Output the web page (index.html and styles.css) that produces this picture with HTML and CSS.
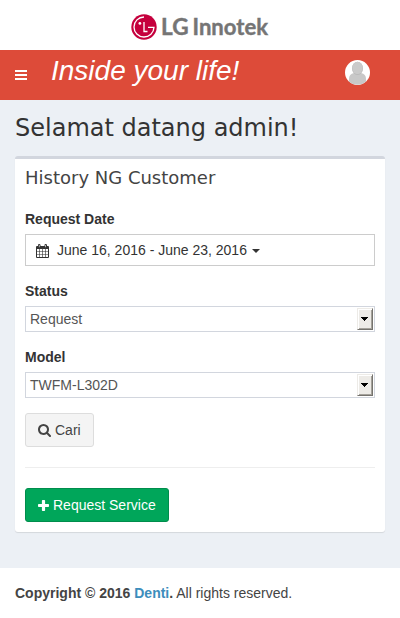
FILE: index.html
```html
<!DOCTYPE html>
<html lang="id">
<head>
<meta charset="utf-8">
<title>LG Innotek</title>
<link rel="stylesheet" href="styles.css">
</head>
<body>
<header>
  <a class="logo">
    <svg class="logo-mark" width="26" height="26" viewBox="0 0 26 26">
      <circle cx="13" cy="13" r="12.7" fill="#c5003d"/>
      <g fill="none" stroke="#fff" stroke-width="1.3">
        <path d="M13 3A10 10 0 1 0 23 13.3H17"/>
        <path d="M13 8V17.500H16.500"/>
      </g>
      <circle cx="8.900" cy="9.400" r="1.400" fill="#fff"/>
    </svg>
    <svg class="logo-name" width="112" height="32" viewBox="0 0 112 32">
      <text x="0" y="24" textLength="27.500" lengthAdjust="spacingAndGlyphs">LG</text>
      <text x="31.500" y="24" textLength="75.500" lengthAdjust="spacingAndGlyphs">Innotek</text>
    </svg>
  </a>
  <nav class="navbar">
    <svg class="bars" width="12" height="10" viewBox="0 0 12 10"><path fill="#fff" d="M0 0h12v2H0zM0 4h12v2H0zM0 8h12v2H0z"/></svg>
    <span class="slogan">Inside your life!</span>
    <svg class="avatar" width="25" height="25" viewBox="0 0 25 25">
      <defs><clipPath id="disc"><circle cx="12.5" cy="12.5" r="12.5"/></clipPath></defs>
      <circle cx="12.5" cy="12.5" r="12.5" fill="#fff"/>
      <g clip-path="url(#disc)">
        <path fill="#c8c8c8" d="M4 23.500V19Q4 14 9 13H16Q21 14 21 19V23.500Q12.500 26 4 23.500z"/>
        <ellipse cx="12.5" cy="8.400" rx="5.500" ry="6.600" fill="#b8b8b8"/>
        <ellipse cx="12.5" cy="8" rx="5.200" ry="6.200" fill="#cacaca"/>
      </g>
    </svg>
  </nav>
</header>
<main>
  <h1>Selamat datang admin!</h1>
  <section class="box">
    <h2>History NG Customer</h2>
    <div class="field">
      <label>Request Date</label>
      <div class="range">
        <svg class="calendar" width="13" height="14" viewBox="0 0 13 14">
          <path fill="#333" fill-rule="evenodd" d="M1 2h1V1q0-1 1.200-1t1.300 1v1h4V1q0-1 1.200-1T11 1v1h1q1 0 1 1v10q0 1-1 1H1q-1 0-1-1V3q0-1 1-1zM1 5v2h2V5zM3.600 5v2H6V5zM6.600 5v2H9V5zM9.600 5v2H12V5zM1 7.600V10h2V7.600zM3.600 7.600V10H6V7.600zM6.600 7.600V10H9V7.600zM9.600 7.600V10H12V7.600zM1 10.600V13h2v-2.400zM3.600 10.600V13H6v-2.400zM6.600 10.600V13H9v-2.400zM9.600 10.600V13H12v-2.400zM2.900 1v2.200h.6V1zM9.400 1v2.200h.6V1z"/>
        </svg>
        <span>June 16, 2016 - June 23, 2016</span>
        <i class="caret"></i>
      </div>
    </div>
    <div class="field">
      <label>Status</label>
      <div class="select"><span>Request</span><b class="arrow"><svg width="7" height="4" viewBox="0 0 7 4" shape-rendering="crispEdges"><path d="M0 0h7v1H6v1H5v1H4v1H3V3H2V2H1V1H0z"/></svg></b></div>
    </div>
    <div class="field">
      <label>Model</label>
      <div class="select"><span>TWFM-L302D</span><b class="arrow"><svg width="7" height="4" viewBox="0 0 7 4" shape-rendering="crispEdges"><path d="M0 0h7v1H6v1H5v1H4v1H3V3H2V2H1V1H0z"/></svg></b></div>
    </div>
    <button class="btn">
      <svg width="13" height="14" viewBox="64 0 1664 1792"><path fill="#444" d="M1216 832q0-185-131.500-316.500t-316.500-131.500-316.500 131.500-131.500 316.500 131.500 316.500 316.500 131.500 316.500-131.500 131.500-316.500zm512 832q0 52-38 90t-90 38q-54 0-90-38l-343-342q-179 124-399 124-143 0-273.500-55.500t-225-150-150-225-55.500-273.500 55.500-273.500 150-225 225-150 273.500-55.500 273.500 55.500 225 150 150 225 55.500 273.500q0 220-124 399l343 343q37 37 37 90z"/></svg>
      <span>Cari</span>
    </button>
    <hr>
    <button class="btn success">
      <svg width="11" height="11" viewBox="0 0 11 11"><path fill="#fff" d="M4.700 0H6.300Q7.100 0 7.100.8V3.900H10.200Q11 3.900 11 4.700V6.300Q11 7.100 10.200 7.100H7.100V10.200Q7.100 11 6.300 11H4.700Q3.900 11 3.900 10.200V7.100H.8Q0 7.100 0 6.300V4.700Q0 3.900.8 3.900H3.900V.8Q3.900 0 4.700 0z"/></svg>
      <span>Request Service</span>
    </button>
  </section>
</main>
<footer><strong>Copyright © 2016 <a>Denti</a>.</strong> All rights reserved.</footer>
</body>
</html>
```
FILE: styles.css
```css
* { box-sizing: border-box; }
body {
  margin: 0;
  height: 618px;
  display: flex;
  flex-direction: column;
  background: #fff;
  color: #444;
  font: 14px/20px "Liberation Sans", Arial, sans-serif;
}
.logo {
  height: 50px;
  display: flex;
  align-items: center;
  padding: 3px 0 0 131px;
}
.logo-name {
  margin-left: 4px;
  overflow: visible;
}
.logo-name text {
  font: bold 22px Lato, sans-serif;
  fill: #757575;
  stroke: #757575;
  stroke-width: .4px;
}
.navbar {
  height: 50px;
  display: flex;
  align-items: flex-start;
  padding-left: 15px;
  background: #dd4b39;
}
.bars { margin-top: 20px; }
.slogan {
  flex: 1;
  margin-left: 24px;
  color: #fff;
  font-size: 28px;
  font-style: italic;
  line-height: 42px;
}
.avatar { margin: 10px 30px 0 0; }
main {
  height: 468px;
  padding: 15px 15px 0;
  background: #ecf0f5;
}
h1, h2 {
  margin: 0;
  font-family: "DejaVu Sans", sans-serif;
  font-weight: normal;
}
h1 {
  height: 41px;
  color: #333;
  font-size: 24px;
  line-height: 26px;
}
.box {
  height: 376px;
  padding: 10px;
  border-top: 3px solid #d2d6de;
  border-radius: 3px;
  background: #fff;
  box-shadow: 0 1px 1px rgba(0, 0, 0, .1);
}
h2 {
  margin-bottom: 22px;
  font-size: 18px;
  line-height: 18px;
}
.field { margin-bottom: 15px; }
label {
  display: block;
  margin-bottom: 5px;
  color: #333;
  font-weight: bold;
}
.range {
  height: 32px;
  display: flex;
  align-items: center;
  padding: 0 10px;
  border: 1px solid #ccc;
  color: #333;
}
.calendar { margin: 2px 8px 0 0; }
.caret {
  margin: 1px 0 0 5px;
  border: 4px solid transparent;
  border-top-color: #333;
  border-bottom: 0;
}
.select {
  height: 26px;
  display: flex;
  align-items: center;
  justify-content: space-between;
  padding: 1px 1px 1px 4px;
  border: 1px solid #d2d6de;
  color: #555;
}
.arrow {
  width: 16px;
  height: 22px;
  display: grid;
  place-items: center;
  padding-right: 1px;
  border: 1px solid;
  border-color: #edebe7 #75736e #75736e #edebe7;
  background: #edebe7;
  box-shadow: inset 1px 1px #fff, inset -1px -1px #a5a29b;
}
.btn {
  height: 34px;
  display: flex;
  align-items: center;
  padding: 0 12px;
  border: 1px solid #ddd;
  border-radius: 3px;
  background: #f4f4f4;
  color: #444;
  font: inherit;
}
.btn svg { margin-right: 4px; }
.success {
  border-color: #008d4c;
  background: #00a65a;
  color: #fff;
}
hr {
  margin: 20px 0;
  border: 0;
  border-top: 1px solid #eee;
}
footer { padding: 15px; }
footer a { color: #3c8dbc; }
```
